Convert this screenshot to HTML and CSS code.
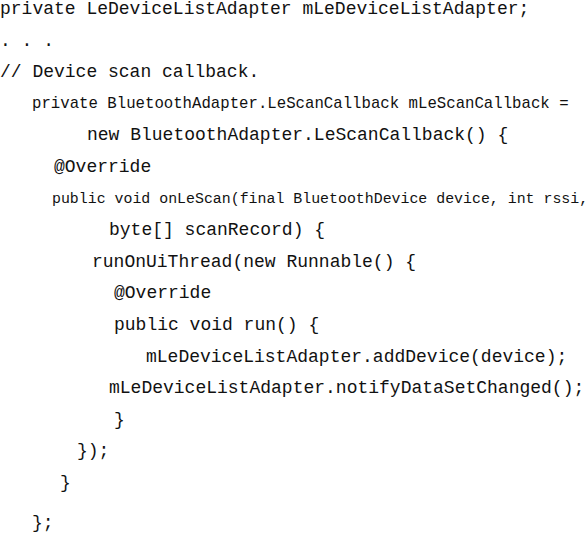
FILE: index.html
```html
<!DOCTYPE html>
<html lang="en">
<head>
<meta charset="utf-8">
<title>Device scan callback</title>
<link rel="stylesheet" href="styles.css">
</head>
<body>
<div class="code">
  <div class="line ind-0">private LeDeviceListAdapter mLeDeviceListAdapter;</div>
  <div class="line ind-0">. . .</div>
  <div class="line ind-0">// Device scan callback.</div>
  <div class="line small-a ind-4">private BluetoothAdapter.LeScanCallback mLeScanCallback =</div>
  <div class="line ind-5">new BluetoothAdapter.LeScanCallback() {</div>
  <div class="line ind-6">@Override</div>
  <div class="line small-b ind-7">public void onLeScan(final BluetoothDevice device, int rssi,</div>
  <div class="line ind-8">byte[] scanRecord) {</div>
  <div class="line ind-9">runOnUiThread(new Runnable() {</div>
  <div class="line ind-10">@Override</div>
  <div class="line ind-10">public void run() {</div>
  <div class="line ind-12">mLeDeviceListAdapter.addDevice(device);</div>
  <div class="line ind-13">mLeDeviceListAdapter.notifyDataSetChanged();</div>
  <div class="line ind-14">}</div>
  <div class="line ind-15">});</div>
  <div class="line ind-16">}</div>
  <div class="line last ind-17">};</div>
</div>
</body>
</html>
```
FILE: styles.css
```css
html, body {
  margin: 0;
  padding: 0;
  background: #ffffff;
}

.code {
  display: flex;
  flex-direction: column;
  padding-top: 2px;
  font-family: "Liberation Mono", monospace;
  font-size: 18px;
  color: #111111;
}

.line {
  white-space: pre;
  height: 31.6px;
  line-height: 14px;
  overflow: visible;
}

.line.last {
  margin-top: 8px;
}

.small-a { font-size: 15.7px; }
.small-b { font-size: 14.9px; }

.ind-0 { padding-left: 0; }
.ind-4 { padding-left: 32px; }
.ind-5 { padding-left: 87px; }
.ind-6 { padding-left: 54px; }
.ind-7 { padding-left: 52px; }
.ind-8 { padding-left: 109px; }
.ind-9 { padding-left: 92px; }
.ind-10 { padding-left: 114px; }
.ind-12 { padding-left: 146px; }
.ind-13 { padding-left: 109px; }
.ind-14 { padding-left: 114px; }
.ind-15 { padding-left: 77px; }
.ind-16 { padding-left: 60px; }
.ind-17 { padding-left: 32px; }
```
